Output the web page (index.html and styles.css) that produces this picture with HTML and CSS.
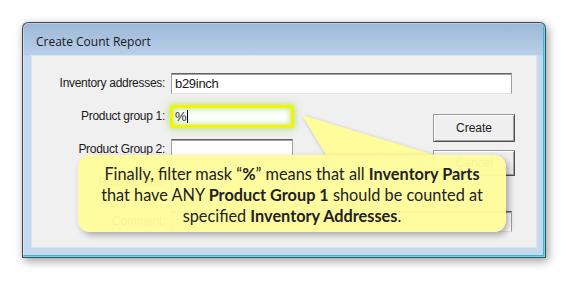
FILE: index.html
```html
<!DOCTYPE html>
<html lang="en">
<head>
    <meta charset="UTF-8">
    <title>Create Count Report</title>
    <link rel="stylesheet" href="styles.css">
</head>
<body>
    <div class="window">
        <div class="title-bar">Create Count Report</div>

        <div class="client">
            <label class="field-label">Inventory addresses:</label>
            <div class="input wide">b29inch</div>

            <label class="field-label">Product group 1:</label>
            <div class="input highlight">%<span class="caret"></span></div>
            <div class="button-stack">
                <button class="win-btn">Create</button>
                <button class="win-btn">Cancel</button>
            </div>

            <label class="field-label">Product Group 2:</label>
            <div class="input"></div>

            <label class="field-label">Product Line:</label>
            <div class="input"></div>

            <label class="field-label comment-row">Comment:</label>
            <div class="input wide comment-row"></div>
        </div>

        <svg class="callout-pointer" width="140" height="42" viewBox="0 0 140 42">
            <polygon points="0,0 24,40 132,40" fill="#fffc9c" />
        </svg>
        <div class="callout">
            Finally, filter mask “<b>%</b>” means that all <b>Inventory Parts</b><br>
            that have ANY <b>Product Group 1</b> should be counted at<br>
            specified <b>Inventory Addresses</b>.
        </div>
    </div>
</body>
</html>
```

FILE: styles.css
```css
:root {
    --frame-dark: #3b4754;
    --frame-blue: #c4d8ee;
    --client-bg: #f0f0f0;
    --callout-yellow: #fffc9c;
}
body {
    margin: 0;
    width: 568px;
    height: 281px;
    overflow: hidden;
    background-color: #fff;
}
.window {
    position: relative;
    margin: 22px 0 0 22px;
    width: 522px;
    height: 234px;
    border: 1px solid var(--frame-dark);
    border-right-color: #1f5f6a;
    border-bottom-color: #1f5f6a;
    border-radius: 6px 6px 0 0;
    background: linear-gradient(#9cb7d7 0, #b9cfe8 32px, var(--frame-blue) 33px, var(--frame-blue) 100%);
    box-shadow: 2px 3px 10px rgba(0,0,0,0.4), inset 0 0 0 1px rgba(255,255,255,0.35), inset -2px -2px 0 #48b4c8;
}
.title-bar {
    height: 32px;
    padding-left: 13px;
    font-family: 'Open Sans', sans-serif;
    font-size: 12px;
    line-height: 38px;
    color: #1a1a1a;
}
.client {
    margin: 0 8px;
    height: 193px;
    box-sizing: border-box;
    background-color: var(--client-bg);
    border: 1px solid #d9e4f0;
    display: grid;
    grid-template-columns: 133px 122px 1fr 82px;
    grid-template-rows: 21px 21px 21px 21px 21px;
    column-gap: 6px;
    row-gap: 12px;
    padding: 17px 21px 0 0;
    font-family: 'Liberation Sans', Arial, sans-serif;
    font-size: 12px;
    color: #1a1a1a;
}
.field-label {
    grid-column: 1;
    text-align: right;
    line-height: 21px;
    white-space: nowrap;
    letter-spacing: -0.3px;
}
.input {
    grid-column: 2;
    box-sizing: border-box;
    height: 21px;
    padding: 0 3px;
    line-height: 19px;
    background-color: #fff;
    border: 1px solid;
    border-color: #646464 #a0a0a0 #e3e3e3 #a0a0a0;
    box-shadow: inset 0 1px 0 #a0a0a0;
    font-size: 13px;
    letter-spacing: -0.3px;
}
.input.wide {
    grid-column: 2 / 5;
    width: calc(100% - 3px);
}
.comment-row {
    margin-top: 6px;
}
.input.highlight {
    border: 3px solid #f4f400;
    border-radius: 3px;
    margin: -1px;
    height: 23px;
    line-height: 17px;
    padding: 0 2px;
    box-shadow: 0 0 6px 2px rgba(180,225,110,0.7), inset 0 0 5px 2px rgba(200,235,150,0.9);
}
.caret {
    display: inline-block;
    width: 1px;
    height: 13px;
    margin-left: 1px;
    vertical-align: -2px;
    background-color: #000;
}
.button-stack {
    grid-column: 4;
    grid-row: 2 / 5;
    display: flex;
    flex-direction: column;
    gap: 8px;
    padding-top: 8px;
}
.win-btn {
    height: 28px;
    padding: 0;
    font-family: 'Liberation Sans', Arial, sans-serif;
    font-size: 12px;
    color: #1a1a1a;
    background-color: #efefef;
    border: 1px solid;
    border-color: #9a9a9a #505050 #505050 #9a9a9a;
    box-shadow: inset 1px 1px 0 #fff, inset -1px -1px 0 #a0a0a0;
}
.win-btn + .win-btn {
    height: 26px;
}
.callout-pointer {
    position: absolute;
    left: 279px;
    top: 92px;
    filter: drop-shadow(2px 2px 2px rgba(0,0,0,0.3));
}
.callout {
    position: absolute;
    left: 55px;
    top: 132px;
    width: 428px;
    height: 77px;
    box-sizing: border-box;
    padding-top: 8px;
    border-radius: 12px;
    background-color: rgba(255,252,156,0.96);
    box-shadow: 3px 3px 6px rgba(0,0,0,0.3);
    text-align: center;
    font-family: 'Lato', sans-serif;
    font-size: 16.3px;
    line-height: 21px;
    color: #222;
}
.callout b {
    font-weight: 700;
}
```
